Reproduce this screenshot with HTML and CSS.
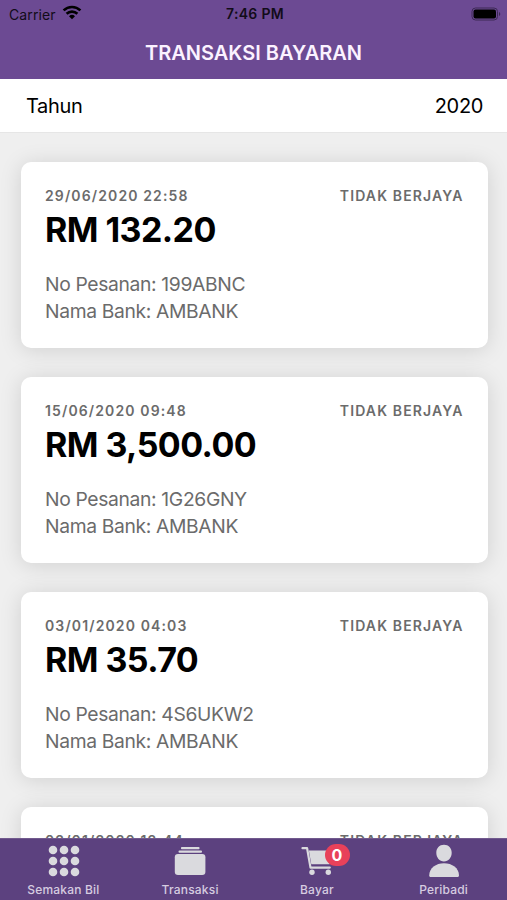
FILE: index.html
```html
<!DOCTYPE html>
<html lang="ms">
<head>
    <meta charset="UTF-8">
    <meta name="viewport" content="width=device-width, initial-scale=1.0">
    <title>Transaksi Bayaran</title>
    <link rel="stylesheet" href="styles.css">
</head>
<body>
    <header>
        <div class="status-bar">
            <div class="carrier">
                <span>Carrier</span>
                <svg width="20" height="15" viewBox="0 0 20 15" fill="none" stroke="#000" stroke-width="2.6">
                    <path d="M1.6 5.4a12 12 0 0 1 16.8 0"/>
                    <path d="M4.6 8.8a7.7 7.7 0 0 1 10.8 0"/>
                    <path d="M10 14.2l-3-3a4.3 4.3 0 0 1 6 0z" fill="#000" stroke="none"/>
                </svg>
            </div>
            <span class="time">7:46 PM</span>
            <svg class="battery" width="30" height="14" viewBox="0 0 30 14">
                <rect x="1" y="1" width="25.5" height="12" rx="3.5" fill="none" stroke="#3c2955" stroke-width="1"/>
                <rect x="2.5" y="2.5" width="22.5" height="9" rx="2" fill="#000"/>
                <path d="M28 5v4a2.2 2.2 0 0 0 0-4z" fill="#3c2955"/>
            </svg>
        </div>
        <h1>TRANSAKSI BAYARAN</h1>
    </header>
    <div class="year-row">
        <span>Tahun</span>
        <span>2020</span>
    </div>
    <main>
        <div class="card">
            <div class="card-top">
                <span>29/06/2020 22:58</span>
                <span class="status">TIDAK BERJAYA</span>
            </div>
            <h2>RM 132.20</h2>
            <p>No Pesanan: 199ABNC</p>
            <p>Nama Bank: AMBANK</p>
        </div>
        <div class="card">
            <div class="card-top">
                <span>15/06/2020 09:48</span>
                <span class="status">TIDAK BERJAYA</span>
            </div>
            <h2>RM 3,500.00</h2>
            <p>No Pesanan: 1G26GNY</p>
            <p>Nama Bank: AMBANK</p>
        </div>
        <div class="card">
            <div class="card-top">
                <span>03/01/2020 04:03</span>
                <span class="status">TIDAK BERJAYA</span>
            </div>
            <h2>RM 35.70</h2>
            <p>No Pesanan: 4S6UKW2</p>
            <p>Nama Bank: AMBANK</p>
        </div>
        <div class="card">
            <div class="card-top">
                <span>02/01/2020 12:44</span>
                <span class="status">TIDAK BERJAYA</span>
            </div>
        </div>
    </main>
    <nav>
        <a class="tab">
            <svg width="34" height="34" viewBox="-1 0 34 34">
                <circle cx="6" cy="6" r="4.3"/><circle cx="17" cy="6" r="4.3"/><circle cx="28" cy="6" r="4.3"/>
                <circle cx="6" cy="17" r="4.3"/><circle cx="17" cy="17" r="4.3"/><circle cx="28" cy="17" r="4.3"/>
                <circle cx="6" cy="28" r="4.3"/><circle cx="17" cy="28" r="4.3"/><circle cx="28" cy="28" r="4.3"/>
            </svg>
            <span>Semakan Bil</span>
        </a>
        <a class="tab">
            <svg width="34" height="34" viewBox="0 0 34 34">
                <rect x="8" y="3" width="18.5" height="2.2" rx="0.8"/>
                <rect x="5.5" y="6.4" width="23.5" height="2.4" rx="1"/>
                <rect x="1.8" y="10" width="30.6" height="21" rx="3.2"/>
            </svg>
            <span>Transaksi</span>
        </a>
        <a class="tab">
            <svg width="34" height="34" viewBox="0 0 34 34">
                <path d="M2.500 4.200h4.600l3.400 19.400h19.300" fill="none" stroke="#dadade" stroke-width="2.200" stroke-linecap="round" stroke-linejoin="round"/>
                <path d="M8.9 6.600H32l-2.500 13.600H11.300z"/>
                <circle cx="12" cy="28.200" r="2.700"/>
                <circle cx="28.300" cy="28.200" r="2.700"/>
            </svg>
            <b class="badge">0</b>
            <span>Bayar</span>
        </a>
        <a class="tab">
            <svg width="34" height="34" viewBox="0 0 34 34">
                <path d="M17 0.8c4.6 0 7.7 3.5 7.7 8 0 4.8-3.2 8.7-7.7 8.7s-7.7-3.9-7.7-8.700c0-4.500 3.100-8 7.700-8z"/>
                <path d="M2.200 31.500C2.200 24 9 19.300 17 19.300S32 24 32 31.500c0 .9-.6 1.500-1.500 1.500h-27c-.8 0-1.300-.6-1.300-1.500z"/>
            </svg>
            <span>Peribadi</span>
        </a>
    </nav>
</body>
</html>
```
FILE: styles.css
```css
* {
    box-sizing: border-box;
}
body {
    display: flex;
    flex-direction: column;
    height: 900px;
    margin: 0;
    overflow: hidden;
    font-family: Inter, "Liberation Sans", sans-serif;
    background: #efefef;
    color: #000;
}
header {
    flex: none;
    height: 79px;
    background: #6c4a93;
}
.status-bar {
    display: grid;
    grid-template-columns: 1fr auto 1fr;
    align-items: center;
    height: 27px;
    padding: 0 6px 0 9px;
    font-size: 14px;
    line-height: 27px;
    color: #120c19;
}
.carrier {
    display: flex;
    align-items: center;
    gap: 6px;
    letter-spacing: 0.1px;
}
.carrier svg {
    margin-top: -3px;
}
.time {
    font-weight: 600;
    font-size: 14px;
    letter-spacing: 0.3px;
    line-height: 28px;
}
.battery {
    justify-self: end;
}
h1 {
    margin: 0;
    color: #fbf2ff;
    font-size: 20px;
    font-weight: 600;
    line-height: 52px;
    text-align: center;
}
.year-row {
    flex: none;
    display: flex;
    justify-content: space-between;
    height: 54px;
    padding: 0 24px 0 26px;
    background: #fff;
    border-bottom: 1px solid #e6e6e6;
    font-size: 20px;
    line-height: 54px;
    letter-spacing: -0.35px;
}
main {
    flex: 1;
    min-height: 0;
    overflow: hidden;
    padding: 29px 19.5px 0 20.5px;
}
.card {
    height: 186px;
    margin-bottom: 29px;
    padding: 25px 24px 0 24.5px;
    background: #fff;
    border-radius: 10px;
    box-shadow: 0 2px 22px rgba(0, 0, 0, 0.13);
}
.card-top {
    display: flex;
    justify-content: space-between;
    color: #6b6b6b;
    font-size: 14px;
    font-weight: 600;
    line-height: 18px;
    letter-spacing: 1.12px;
}
.card h2 {
    margin: 4px 0 21px;
    font-size: 34px;
    font-weight: 700;
    line-height: 41px;
    letter-spacing: -0.55px;
}
.card p {
    margin: 0;
    color: #6b6b6b;
    font-size: 19.3px;
    line-height: 27px;
    letter-spacing: -0.35px;
}
nav {
    flex: none;
    display: grid;
    grid-template-columns: repeat(4, 1fr);
    height: 62px;
    background: #5c417f;
    border-top: 1px solid #715a8d;
}
.tab {
    position: relative;
    display: flex;
    flex-direction: column;
    align-items: center;
    padding-top: 5px;
    color: #d6cce0;
    font-size: 12px;
    font-weight: 500;
    line-height: 23px;
    letter-spacing: 0.2px;
}
.tab svg {
    flex: none;
    fill: #dadade;
}
.badge {
    position: absolute;
    top: 5px;
    left: 71px;
    width: 25px;
    height: 22px;
    border-radius: 11px;
    background: #e8415a;
    color: #fff;
    font-size: 16px;
    line-height: 22px;
    letter-spacing: 0;
    text-align: center;
}
```
